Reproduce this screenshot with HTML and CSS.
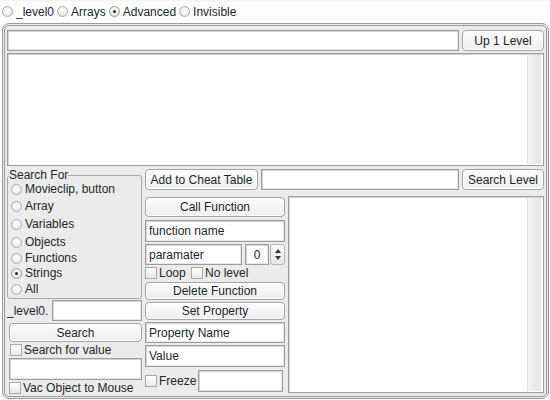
FILE: index.html
```html
<!DOCTYPE html>
<html>
<head>
<meta charset="utf-8">
<link rel="stylesheet" href="styles.css">
</head>
<body>
<div class="top-radios">
  <label class="opt"><span class="radio"></span>_level0</label>
  <label class="opt"><span class="radio"></span>Arrays</label>
  <label class="opt"><span class="radio on"></span>Advanced</label>
  <label class="opt"><span class="radio"></span>Invisible</label>
</div>
<div class="panel">
  <div class="row1">
    <div class="input grow"></div>
    <div class="btn up">Up 1 Level</div>
  </div>
  <div class="listbox"><div class="lb-body"></div><div class="track"></div></div>
  <div class="bottom">
    <div class="leftcol">
      <fieldset class="group">
        <legend>Search For</legend>
        <label class="ritem r1"><span class="radio"></span>Movieclip, button</label>
        <label class="ritem r2"><span class="radio"></span>Array</label>
        <label class="ritem r3"><span class="radio"></span>Variables</label>
        <label class="ritem r4"><span class="radio"></span>Objects</label>
        <label class="ritem r5"><span class="radio"></span>Functions</label>
        <label class="ritem r6"><span class="radio on"></span>Strings</label>
        <label class="ritem r7"><span class="radio"></span>All</label>
      </fieldset>
      <div class="levelrow">
        <span class="lvl">_level0.</span>
        <div class="input grow h21"></div>
      </div>
      <div class="btn search">Search</div>
      <label class="check c1"><span class="box"></span>Search for value</label>
      <div class="input valin"></div>
      <label class="check c2"><span class="box"></span>Vac Object to Mouse</label>
    </div>
    <div class="rightarea">
      <div class="row2">
        <div class="btn cheat">Add to Cheat Table</div>
        <div class="input cheatin"></div>
        <div class="btn slevel">Search Level</div>
      </div>
      <div class="row3">
        <div class="midcol">
          <div class="btn callf">Call Function</div>
          <div class="input fname">function name</div>
          <div class="paramrow">
            <div class="input param">paramater</div>
            <div class="input num">0</div>
            <div class="spin"><span class="up-arr"></span><span class="dn-arr"></span></div>
          </div>
          <div class="checks">
            <label class="check"><span class="box"></span>Loop</label>
            <label class="check"><span class="box"></span>No level</label>
          </div>
          <div class="btn delf">Delete Function</div>
          <div class="btn setp">Set Property</div>
          <div class="input pname">Property Name</div>
          <div class="input pval">Value</div>
          <div class="freezerow">
            <label class="check"><span class="box"></span>Freeze</label>
            <div class="input freezein"></div>
          </div>
        </div>
        <div class="textarea"><div class="lb-body"></div><div class="track"></div></div>
      </div>
    </div>
  </div>
</div>
</body>
</html>
```
FILE: styles.css
```css
* { box-sizing: border-box; }
html, body { margin: 0; padding: 0; }
body {
  width: 550px;
  height: 400px;
  background: #ffffff;
  font-family: "Liberation Sans", Arial, sans-serif;
  font-size: 12px;
  color: #1c2828;
  overflow: hidden;
}
.top-radios {
  height: 23px;
  display: flex;
  align-items: center;
  padding: 0 0 0 2px;
  background: linear-gradient(#f0f0f0 0, #fdfdfd 2px, #ffffff 100%);
}
.opt { display: flex; align-items: center; margin-right: 3px; }
.opt .radio { margin-right: 3px; }
.radio {
  display: inline-block;
  width: 11px;
  height: 11px;
  border-radius: 50%;
  border: 1px solid #ababab;
  background: radial-gradient(circle at 50% 40%, #ffffff 0, #f2f2f2 45%, #d6d6d6 100%);
  position: relative;
  flex: none;
}
.radio.on { border-color: #7aa88a; }
.radio.on::after {
  content: "";
  position: absolute;
  left: 3px; top: 3px;
  width: 3px; height: 3px;
  border-radius: 50%;
  background: #222;
}
.panel {
  margin-left: 2px;
  width: 547px;
  height: 376px;
  border: 3px double #9b9b9b;
  border-radius: 7px;
  background: #ebebeb;
  padding: 4px 2px 2px 2px;
}
.input {
  background: #ffffff;
  border: 1px solid #9d9d9d;
  box-shadow: inset 1px 1px 0 #d4d4d4, inset -1px -1px 0 #e6e6e6;
  height: 21px;
  padding: 0 3px;
  display: flex;
  align-items: center;
  white-space: nowrap;
}
.grow { flex: 1; }
.btn {
  border: 1px solid #a3a3a3;
  border-radius: 4px;
  background: linear-gradient(#fcfcfc, #eeeeee);
  box-shadow: inset 0 0 0 1px #ffffff;
  display: flex;
  align-items: center;
  justify-content: center;
  white-space: nowrap;
  height: 21px;
}
.row1 { display: flex; height: 21px; }
.row1 .btn.up { width: 82px; margin-left: 3px; }
.listbox {
  margin-top: 2px;
  height: 113px;
  display: flex;
  border: 1px solid #9d9d9d;
  box-shadow: inset 1px 1px 0 #d4d4d4;
  background: #fff;
}
.lb-body { flex: 1; }
.track {
  width: 14px;
  margin: 1px 2px 1px 0;
  background: linear-gradient(90deg, #f4f4f4, #e4e4e4);
  border-left: 1px solid #e0e0e0;
}
.bottom { display: flex; margin-top: 3px; }
.leftcol { width: 137px; display: flex; flex-direction: column; }
.group {
  margin: 1px 0 0 0;
  padding: 0 0 2px 3px;
  border: 1px solid #a9a9a9;
  border-radius: 3px;
  height: 129px;
  min-width: 0;
}
.group legend {
  padding: 0;
  margin-left: -2px;
  line-height: 11px;
  font-size: 12px;
}
.ritem {
  display: flex;
  align-items: center;
  height: 14px;
  line-height: 12px;
}
.ritem .radio { margin-right: 3px; }
.r1 { margin-top: 1px; }
.r2 { margin-top: 3px; }
.r3 { margin-top: 4px; }
.r4 { margin-top: 4px; }
.r5 { margin-top: 2px; }
.r6 { margin-top: 1px; }
.r7 { margin-top: 2px; }
.levelrow { display: flex; align-items: center; margin-top: 1px; height: 21px; }
.lvl { width: 45px; }
.h21 { height: 21px; }
.btn.search { margin: 2px 0 0 2px; height: 19px; }
.check { display: flex; align-items: center; white-space: nowrap; }
.box {
  display: inline-block;
  width: 12px;
  height: 12px;
  border: 1px solid #a8a8a8;
  background: linear-gradient(#ffffff, #e8e8e8);
  margin-right: 2px;
  flex: none;
}
.check.c1 { margin: 1px 0 0 3px; height: 13px; }
.input.valin { margin: 2px 0 0 2px; height: 22px; }
.check.c2 { margin: 1px 0 0 2px; height: 13px; }
.rightarea { margin-left: 3px; flex: 1; display: flex; flex-direction: column; }
.row2 { display: flex; height: 21px; }
.btn.cheat { width: 113px; }
.input.cheatin { width: 198px; margin-left: 3px; }
.btn.slevel { width: 82px; margin-left: 3px; }
.row3 { display: flex; margin-top: 6px; }
.midcol { width: 140px; display: flex; flex-direction: column; }
.btn.callf { height: 20px; margin-top: 1px; }
.input.fname { height: 22px; margin-top: 3px; }
.paramrow { display: flex; margin-top: 2px; height: 21px; }
.input.param { width: 98px; }
.input.num { width: 24px; margin-left: 3px; justify-content: center; padding: 0; }
.spin {
  width: 15px;
  margin-left: 1px;
  border: 1px solid #b5b5b5;
  border-radius: 3px;
  background: linear-gradient(#fafafa, #e6e6e6);
  display: flex;
  flex-direction: column;
  align-items: center;
  justify-content: center;
  gap: 3px;
}
.up-arr { width: 0; height: 0; border-left: 3px solid transparent; border-right: 3px solid transparent; border-bottom: 4px solid #333; }
.dn-arr { width: 0; height: 0; border-left: 3px solid transparent; border-right: 3px solid transparent; border-top: 4px solid #333; }
.checks { display: flex; height: 14px; margin-top: 1px; }
.checks .check:first-child { width: 46px; }
.btn.delf { height: 18px; margin-top: 2px; }
.btn.setp { height: 18px; margin-top: 2px; }
.input.pname { height: 21px; margin-top: 2px; }
.input.pval { height: 22px; margin-top: 2px; }
.freezerow { display: flex; align-items: center; margin-top: 3px; height: 22px; }
.freezerow .check { width: 53px; }
.input.freezein { width: 85px; height: 22px; }
.textarea {
  margin-left: 3px;
  flex: 1;
  height: 197px;
  display: flex;
  border: 1px solid #9d9d9d;
  box-shadow: inset 1px 1px 0 #d4d4d4;
  background: #fff;
}
```
